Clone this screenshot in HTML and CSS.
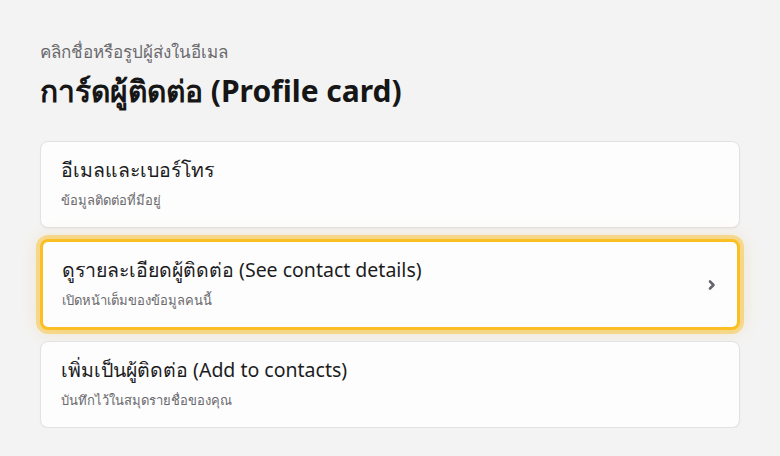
FILE: index.html
```html
<!DOCTYPE html>
<html lang="th">
<head>
    <meta charset="UTF-8">
    <meta name="viewport" content="width=device-width, initial-scale=1.0">
    <title>Profile card</title>
    <link rel="stylesheet" href="styles.css">
</head>
<body>
    <div class="page">
        <p class="eyebrow">คลิกชื่อหรือรูปผู้ส่งในอีเมล</p>
        <h1>การ์ดผู้ติดต่อ (Profile card)</h1>

        <div class="menu">
            <div class="menu-item">
                <div class="item-text">
                    <div class="item-title">อีเมลและเบอร์โทร</div>
                    <div class="item-sub">ข้อมูลติดต่อที่มีอยู่</div>
                </div>
            </div>
            <div class="menu-item active">
                <div class="item-text">
                    <div class="item-title">ดูรายละเอียดผู้ติดต่อ (See contact details)</div>
                    <div class="item-sub">เปิดหน้าเต็มของข้อมูลคนนี้</div>
                </div>
                <svg class="chevron" width="12" height="12" viewBox="0 0 12 12">
                    <path d="M4 2.5 L7.5 6 L4 9.5" fill="none" stroke="#66666b" stroke-width="2.6" stroke-linecap="round" stroke-linejoin="round"/>
                </svg>
            </div>
            <div class="menu-item">
                <div class="item-text">
                    <div class="item-title">เพิ่มเป็นผู้ติดต่อ (Add to contacts)</div>
                    <div class="item-sub">บันทึกไว้ในสมุดรายชื่อของคุณ</div>
                </div>
            </div>
        </div>
    </div>
</body>
</html>
```

FILE: styles.css
```css
body {
    margin: 0;
    background: #f3f3f3;
    font-family: "Noto Sans", sans-serif;
    color: #1c1c1e;
}

.page {
    padding: 38px 40px 0 40px;
}

.eyebrow {
    margin: 0;
    font-size: 17px;
    color: #6a6a6e;
}

h1 {
    margin: 3px 0 26px 0;
    font-size: 30px;
    font-weight: 700;
    color: #161616;
}

.menu {
    display: flex;
    flex-direction: column;
    gap: 11px;
}

.menu-item {
    display: flex;
    align-items: center;
    justify-content: space-between;
    background: #fdfdfd;
    border: 1px solid #e2e2e2;
    border-radius: 8px;
    padding: 0 20px;
    height: 85px;
    box-shadow: 0 1px 2px rgba(0, 0, 0, 0.04);
}

.menu-item.active {
    border: 3px solid #fbbf24;
    padding: 0 19px 0 19px;
    height: 85px;
    box-shadow: 0 0 0 4px rgba(251, 191, 36, 0.45), 0 0 18px rgba(240, 200, 120, 0.45);
}

.item-title {
    margin-top: -3px;
    font-size: 19.5px;
    color: #1c1c1e;
}

.item-sub {
    margin-top: 4px;
    font-size: 13px;
    color: #6a6a6e;
}

.chevron {
    flex-shrink: 0;
}
```
